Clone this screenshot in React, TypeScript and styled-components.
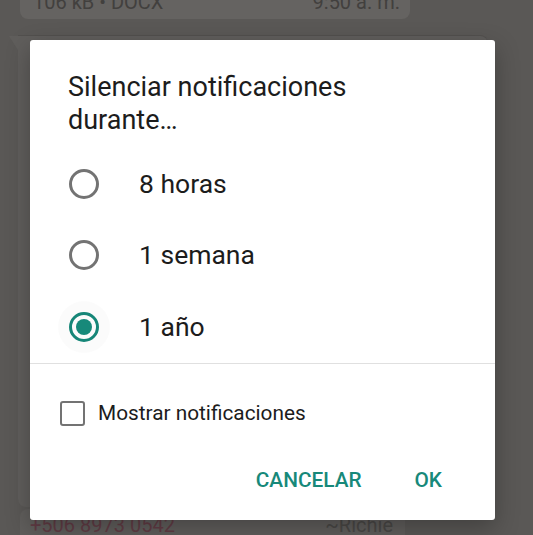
import React from 'react';
import styled, { createGlobalStyle } from 'styled-components';

const GlobalStyle = createGlobalStyle`
  html, body {
    margin: 0;
    padding: 0;
  }
  body {
    width: 533px;
    height: 535px;
    overflow: hidden;
    background: #5a5856;
    font-family: Roboto, 'Noto Sans', Arial, sans-serif;
  }
`;

const Screen = styled.div`
  position: relative;
  width: 533px;
  height: 535px;
  overflow: hidden;
  background: #5a5856;
`;

const Chat = styled.div`
  display: flex;
  flex-direction: column;
  height: 100%;
`;

const FileBubble = styled.div`
  box-sizing: border-box;
  margin-left: 20px;
  width: 390px;
  height: 19px;
  padding: 0 10px 7px 13px;
  display: flex;
  align-items: flex-end;
  justify-content: space-between;
  overflow: hidden;
  background: #656361;
  border-radius: 0 0 8px 8px;
  color: #42403e;
  font-size: 20px;
  line-height: 20px;
`;

const MessageBubble = styled.div`
  position: relative;
  margin: 17px 0 0 18px;
  width: 470px;
  height: 472px;
  background: #605e5c;
  border-radius: 0 8px 8px 8px;
  box-shadow: 0 -1px 0 #52504e;

  &::before {
    content: '';
    position: absolute;
    left: -9px;
    top: 0;
    border-top: 14px solid #605e5c;
    border-left: 9px solid transparent;
  }
`;

const SenderBubble = styled.div`
  box-sizing: border-box;
  margin: 2px 0 0 20px;
  width: 385px;
  flex: 1;
  padding: 6px 12px 0 10px;
  display: flex;
  justify-content: space-between;
  background: #605e5c;
  border-radius: 8px 8px 0 0;
  font-size: 20px;
  line-height: 20px;
`;

const SenderName = styled.span<{ $muted?: boolean }>`
  color: ${p => (p.$muted ? '#4a4846' : '#623c45')};
`;

const Dialog = styled.div`
  position: absolute;
  top: 40px;
  left: 30px;
  width: 465px;
  height: 480px;
  display: flex;
  flex-direction: column;
  background: #ffffff;
  border-radius: 3px;
  box-shadow: 0 8px 24px rgba(0, 0, 0, 0.28);
  color: #212121;
`;

const Title = styled.h2`
  margin: 0;
  padding: 31px 37px 0 38px;
  font-size: 27px;
  line-height: 33px;
  font-weight: 400;
  color: #1c1c1c;
`;

const Options = styled.div`
  margin-top: 11px;
  display: flex;
  flex-direction: column;
`;

const OptionRow = styled.div`
  height: 71.5px;
  padding-left: 39px;
  display: flex;
  align-items: center;
  gap: 40px;
`;

const Radio = styled.span<{ $checked?: boolean }>`
  position: relative;
  box-sizing: border-box;
  width: 30px;
  height: 30px;
  flex: none;
  border-radius: 50%;
  border: 3px solid ${p => (p.$checked ? '#17897a' : '#737373')};

  &::before {
    content: '';
    display: ${p => (p.$checked ? 'block' : 'none')};
    position: absolute;
    inset: -14px;
    border-radius: 50%;
    background: rgba(0, 0, 0, 0.015);
  }

  &::after {
    content: '';
    display: ${p => (p.$checked ? 'block' : 'none')};
    position: absolute;
    inset: 4px;
    border-radius: 50%;
    background: #17897a;
  }
`;

const OptionLabel = styled.span`
  font-size: 26.5px;
  line-height: 30px;
  color: #1c1c1c;
`;

const Divider = styled.div`
  height: 1px;
  background: #e0e0e0;
`;

const CheckRow = styled.label`
  padding: 37px 0 0 30px;
  display: flex;
  align-items: center;
  gap: 13px;
`;

const CheckBox = styled.span`
  box-sizing: border-box;
  width: 25px;
  height: 25px;
  flex: none;
  border: 2.5px solid #737373;
  border-radius: 3px;
`;

const CheckLabel = styled.span`
  font-size: 20.8px;
  line-height: 25px;
  color: #1c1c1c;
`;

const Actions = styled.div`
  margin-top: auto;
  padding: 0 53px 28px 0;
  display: flex;
  justify-content: flex-end;
  gap: 53px;
`;

const ActionButton = styled.button`
  padding: 0;
  border: none;
  background: none;
  font-family: inherit;
  font-size: 20.8px;
  line-height: 24px;
  font-weight: 500;
  color: #17897a;
  cursor: pointer;
`;

const options = [
  { label: '8 horas', checked: false },
  { label: '1 semana', checked: false },
  { label: '1 año', checked: true },
];

export default function App() {
  return (
    <>
      <GlobalStyle />
      <Screen>
        <Chat>
          <FileBubble>
            <span>106 kB • DOCX</span>
            <span>9:50 a. m.</span>
          </FileBubble>
          <MessageBubble />
          <SenderBubble>
            <SenderName>+506 8973 0542</SenderName>
            <SenderName $muted>~Richie</SenderName>
          </SenderBubble>
        </Chat>

        <Dialog>
          <Title>
            Silenciar notificaciones
            <br />
            durante…
          </Title>
          <Options>
            {options.map(o => (
              <OptionRow key={o.label}>
                <Radio $checked={o.checked} />
                <OptionLabel>{o.label}</OptionLabel>
              </OptionRow>
            ))}
          </Options>
          <Divider />
          <CheckRow>
            <CheckBox />
            <CheckLabel>Mostrar notificaciones</CheckLabel>
          </CheckRow>
          <Actions>
            <ActionButton>CANCELAR</ActionButton>
            <ActionButton>OK</ActionButton>
          </Actions>
        </Dialog>
      </Screen>
    </>
  );
}
